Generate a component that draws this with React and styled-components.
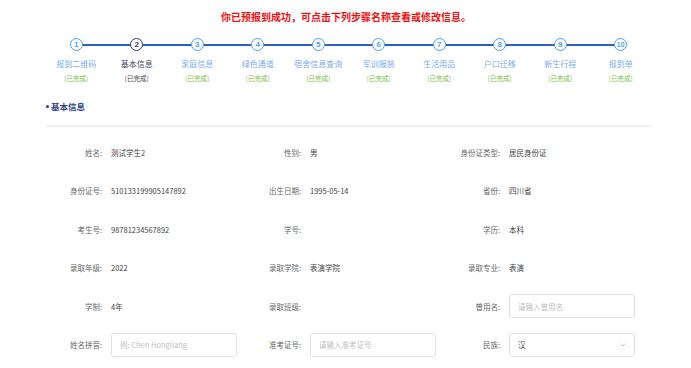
import React from "react";
import styled, { createGlobalStyle } from "styled-components";

const Global = createGlobalStyle`
  html, body { margin: 0; padding: 0; background: #fff; }
  body { font-family: "Noto Sans CJK SC", "Noto Sans", sans-serif; }
  * { box-sizing: border-box; }
`;

const Page = styled.div`
  width: 691px;
  height: 368px;
  overflow: hidden;
  padding: 0 40px 0 46px;
`;

const Title = styled.div`
  text-align: center;
  color: #f01010;
  font-weight: 700;
  font-size: 10px;
  line-height: 14px;
  padding-top: 10px;
  padding-right: 5px;
  height: 38px;
`;

const Steps = styled.div`
  display: grid;
  grid-template-columns: repeat(10, 60.5px);
  position: relative;
  width: 605px;
`;

const Track = styled.div`
  position: absolute;
  left: 30px;
  right: 30px;
  top: 6px;
  height: 1.5px;
  background: #2e5ec2;
`;

const Step = styled.div`
  display: flex;
  flex-direction: column;
  align-items: center;
  position: relative;
`;

const Circle = styled.div`
  width: 13px;
  height: 13px;
  border-radius: 50%;
  background: #fff;
  border: 1.5px solid ${p => (p.$active ? "#2a3e8c" : "#4d9ff2")};
  color: ${p => (p.$active ? "#2a3e8c" : "#4d9ff2")};
  font-family: "Liberation Sans", Arial, sans-serif;
  font-weight: 700;
  font-size: ${p => (p.$small ? "7px" : "8px")};
  display: flex;
  align-items: center;
  justify-content: center;
  line-height: 1;
`;

const StepName = styled.div`
  margin-top: 8px;
  font-size: 8px;
  line-height: 10px;
  color: ${p => (p.$active ? "#3d4a66" : "#7badee")};
  white-space: nowrap;
`;

const StepStatus = styled.div`
  margin-top: 5px;
  font-size: 6.5px;
  line-height: 8px;
  color: ${p => (p.$active ? "#444" : "#76c043")};
  white-space: nowrap;
`;

const SectionTitle = styled.div`
  margin-top: 18px;
  font-size: 8.5px;
  font-weight: 700;
  color: #2a3e8c;
  line-height: 12px;
  display: flex;
  align-items: center;
  gap: 2px;
  &::before {
    content: "";
    flex-shrink: 0;
    width: 3px;
    height: 3px;
    border-radius: 50%;
    background: #2a3e8c;
  }
`;

const Divider = styled.div`
  margin-top: 13px;
  height: 2px;
  background: #efefef;
  width: 605px;
`;

const Form = styled.div`
  display: grid;
  grid-template-columns: repeat(3, 199px);
  grid-auto-rows: 38.5px;
  margin-top: 6px;
`;

const Field = styled.div`
  display: flex;
  align-items: center;
`;

const Label = styled.div`
  width: 56px;
  text-align: right;
  font-size: 7.5px;
  color: #666;
  white-space: nowrap;
  margin-right: 9px;
`;

const Value = styled.div`
  font-size: 7.5px;
  color: #444;
  white-space: nowrap;
`;

const Input = styled.div`
  width: 126px;
  height: 24px;
  border: 1px solid #e2e2e2;
  border-radius: 3px;
  display: flex;
  align-items: center;
  justify-content: space-between;
  padding: 0 8px;
  font-size: 7.5px;
  color: ${p => (p.$filled ? "#444" : "#c0c0c0")};
`;

const Arrow = styled.svg`
  width: 6px;
  height: 4px;
`;

const steps = [
  "报到二维码", "基本信息", "家庭信息", "绿色通道", "宿舍信息查询",
  "军训服装", "生活用品", "户口迁移", "新生行程", "报到单",
];

const fields = [
  ["姓名", "测试学生2"], ["性别", "男"], ["身份证类型", "居民身份证"],
  ["身份证号", "510133199905147892"], ["出生日期", "1995-05-14"], ["省份", "四川省"],
  ["考生号", "98781234567892"], ["学号", ""], ["学历", "本科"],
  ["录取年级", "2022"], ["录取学院", "表演学院"], ["录取专业", "表演"],
  ["学制", "4年"], ["录取班级", ""], ["曾用名", { ph: "请输入曾用名" }],
  ["姓名拼音", { ph: "例: Chen Hongliang" }], ["准考证号", { ph: "请输入准考证号" }], ["民族", { sel: "汉" }],
];

export default function App() {
  return (
    <>
      <Global />
      <Page>
        <Title>你已预报到成功，可点击下列步骤名称查看或修改信息。</Title>
        <Steps>
          <Track />
          {steps.map((s, i) => (
            <Step key={s}>
              <Circle $active={i === 1} $small={i === 9}>{i + 1}</Circle>
              <StepName $active={i === 1}>{s}</StepName>
              <StepStatus $active={i === 1}>[已完成]</StepStatus>
            </Step>
          ))}
        </Steps>
        <SectionTitle>基本信息</SectionTitle>
        <Divider />
        <Form>
          {fields.map(([l, v]) => (
            <Field key={l}>
              <Label>{l}:</Label>
              {typeof v === "string" ? (
                <Value>{v}</Value>
              ) : v.sel ? (
                <Input $filled>
                  {v.sel}
                  <Arrow viewBox="0 0 6 4">
                    <path d="M0.5 0.5 L3 3 L5.5 0.5" fill="none" stroke="#bbb" strokeWidth="0.8" />
                  </Arrow>
                </Input>
              ) : (
                <Input>{v.ph}</Input>
              )}
            </Field>
          ))}
        </Form>
      </Page>
    </>
  );
}
